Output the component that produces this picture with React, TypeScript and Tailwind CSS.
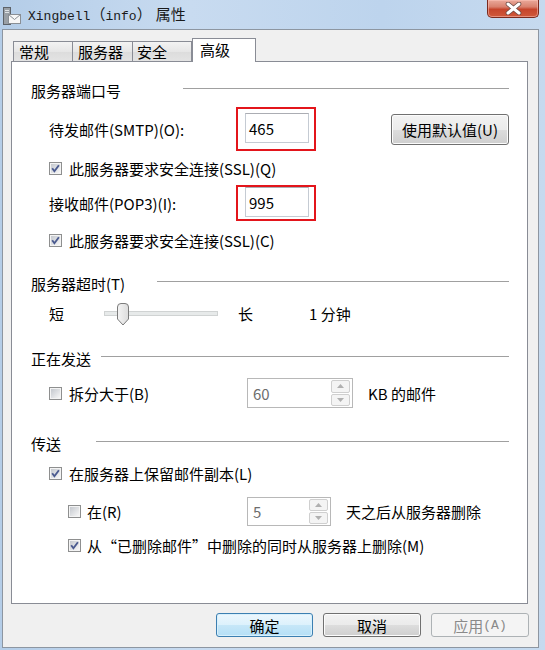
import React from 'react';

const Checkbox = ({ checked }: { checked: boolean }) => (
  <svg width="13" height="13" viewBox="0 0 13 13" className="shrink-0">
    <defs>
      <linearGradient id="cbInner" x1="0" y1="0" x2="1" y2="1">
        <stop offset="0" stopColor="#c4c8ce" />
        <stop offset="1" stopColor="#f7f7f7" />
      </linearGradient>
    </defs>
    <rect x="0.5" y="0.5" width="12" height="12" fill="#f4f4f4" stroke="#8e8f8f" />
    <rect x="2" y="2" width="9" height="9" fill="url(#cbInner)" />
    {checked && <path d="M3.2 6.3 L5.4 9.2 L9.9 3.2" fill="none" stroke="#4a5a8f" strokeWidth="1.9" />}
  </svg>
);

const Header = ({ label, w }: { label: string; w: string }) => (
  <div className="flex items-center h-[20px] pl-[19px] pr-[18px]">
    <span className={`${w} shrink-0`}>{label}</span>
    <div className="flex-1 h-px bg-[#a0a0a0] mb-[4px]" />
  </div>
);

const Spinner = ({ value, w, h }: { value: string; w: string; h: string }) => (
  <div className={`${w} ${h} shrink-0 flex items-stretch border border-[#b8b8b8] bg-white`}>
    <span className="flex-1 pl-[5px] flex items-center text-[#6d6d6d]">{value}</span>
    <div className="w-[19px] mr-[2px] py-[1px] flex flex-col gap-[1px]">
      <div className="flex-1 rounded-[2px] border border-[#cfcfcf] bg-[#f4f4f4] flex items-center justify-center">
        <svg width="7" height="4" viewBox="0 0 7 4"><path d="M0 4 L3.5 0 L7 4 Z" fill="#b0b0b0" /></svg>
      </div>
      <div className="flex-1 rounded-[2px] border border-[#cfcfcf] bg-[#f4f4f4] flex items-center justify-center">
        <svg width="7" height="4" viewBox="0 0 7 4"><path d="M0 0 L3.5 4 L7 0 Z" fill="#b0b0b0" /></svg>
      </div>
    </div>
  </div>
);

const TextBox = ({ value }: { value: string }) => (
  <div className="w-[64px] h-[30px] border border-[#c5cbd3] border-t-[#abadb3] bg-white flex items-center pl-[3px]">
    {value}
  </div>
);

export default function App() {
  return (
    <div className="w-[545px] h-[650px] overflow-hidden bg-[linear-gradient(90deg,#b4cde8,#c8dbf0_35%,#bdd4ed_70%,#c6daef)] text-[15px] text-black font-['Noto_Sans_CJK_SC',sans-serif] leading-none">
      {/* Title bar */}
      <div className="h-[29px] flex items-start">
        <svg width="18" height="20" viewBox="0 0 18 20" className="ml-[3px] mt-[6px] shrink-0">
          <rect x="0.5" y="1.5" width="7" height="17" fill="#9aa0a6" stroke="#5d6268" />
          <rect x="2" y="4" width="4" height="1" fill="#dfe3e6" />
          <rect x="2" y="6" width="4" height="1" fill="#dfe3e6" />
          <rect x="5.5" y="8.5" width="12" height="9" fill="#f7f7f7" stroke="#8a8f95" />
          <path d="M5.5 8.5 L11.5 13.5 L17.5 8.5" fill="none" stroke="#8a8f95" />
        </svg>
        <div className="ml-[7px] mt-[6px] flex items-baseline text-[#1a1a1a]">
          <span className="font-['Liberation_Mono',monospace] text-[13px]">Xingbell</span>
          <span className="text-[15px]">（</span>
          <span className="font-['Liberation_Mono',monospace] text-[13px]">info</span>
          <span className="text-[15px]">）</span>
          <span className="text-[15px] ml-[4px]">属性</span>
        </div>
        <div className="ml-auto mr-[6px] w-[52px] h-[18px] rounded-b-[5px] border border-t-0 border-[#7a2a1e] bg-[linear-gradient(#eaa99a,#d9826f_40%,#c6452c_55%,#d0593b)] flex items-center justify-center shadow-[inset_0_0_0_1px_rgba(255,200,190,0.5)]">
          <svg width="17" height="13" viewBox="0 0 17 13">
            <path d="M3 2 L14 11 M14 2 L3 11" stroke="#6b4a44" strokeWidth="4.6" strokeLinecap="round" />
            <path d="M3 2 L14 11 M14 2 L3 11" stroke="#ffffff" strokeWidth="3" strokeLinecap="round" />
          </svg>
        </div>
      </div>

      {/* Client area */}
      <div className="ml-[2px] w-[537px] h-[619px] border border-[#8d96a1] bg-[#f0f0f0] flex flex-col">
        {/* Tabs */}
        <div className="mt-[8px] pl-[10px] h-[23px] flex items-end">
          <div className="w-[60px] h-[20px] border border-b-0 border-[#898c95] bg-[linear-gradient(#f3f3f3,#e6e6e6_50%,#dcdcdc_51%,#e3e3e3)] pl-[5px] flex items-center">常规</div>
          <div className="w-[60px] h-[20px] border border-b-0 border-l-0 border-[#898c95] bg-[linear-gradient(#f3f3f3,#e6e6e6_50%,#dcdcdc_51%,#e3e3e3)] pl-[5px] flex items-center">服务器</div>
          <div className="w-[59px] h-[20px] border border-b-0 border-l-0 border-[#898c95] bg-[linear-gradient(#f3f3f3,#e6e6e6_50%,#dcdcdc_51%,#e3e3e3)] pl-[4px] flex items-center">安全</div>
          <div className="w-[64px] h-[24px] -mb-px relative z-10 border border-b-0 border-[#898c95] bg-white pl-[7px] pb-[2px] flex items-center">高级</div>
        </div>

        {/* Panel */}
        <div className="ml-[8px] w-[517px] h-[543px] border border-[#898c95] bg-white flex flex-col">
          <div className="mt-[18px]">
            <Header label="服务器端口号" w="w-[152px]" />
          </div>

          <div className="mt-[7px] h-[44px] flex items-center pl-[37px]">
            <span className="w-[187px] shrink-0">待发邮件(SMTP)(O):</span>
            <div className="w-[80px] h-[44px] shrink-0 border-2 border-[#e3151b] pt-[4px] pl-[7px]">
              <TextBox value="465" />
            </div>
            <button className="ml-[75px] w-[118px] h-[31px] rounded-[3px] border border-[#707070] bg-[linear-gradient(#f2f2f2,#ebebeb_50%,#dddddd_51%,#cfcfcf)] shadow-[inset_0_0_0_1px_#fcfcfc] text-[15px] font-['Noto_Sans_CJK_SC',sans-serif]">
              使用默认值(U)
            </button>
          </div>

          <div className="h-[34px] flex items-center pl-[37px] gap-[7px]">
            <Checkbox checked />
            <span>此服务器要求安全连接(SSL)(Q)</span>
          </div>

          <div className="h-[36px] flex items-center pl-[37px]">
            <span className="w-[187px] shrink-0">接收邮件(POP3)(I):</span>
            <div className="w-[80px] h-[36px] shrink-0 border-2 border-[#e3151b] pl-[7px]">
              <TextBox value="995" />
            </div>
          </div>

          <div className="h-[38px] flex items-center pl-[37px] gap-[7px]">
            <Checkbox checked />
            <span>此服务器要求安全连接(SSL)(C)</span>
          </div>

          <div className="mt-[14px]">
            <Header label="服务器超时(T)" w="w-[126px]" />
          </div>

          <div className="h-[40px] flex items-center pl-[37px]">
            <span className="w-[55px] shrink-0">短</span>
            <div className="relative w-[114px] h-[5px] shrink-0 border border-[#d0d3d3] bg-[#e7eaea]">
              <svg width="14" height="23" viewBox="0 0 14 23" className="absolute left-[11px] -top-[9px]">
                <defs>
                  <linearGradient id="thumbFill" x1="0" y1="0" x2="1" y2="0">
                    <stop offset="0" stopColor="#f4f4f4" />
                    <stop offset="1" stopColor="#dcdcdc" />
                  </linearGradient>
                </defs>
                <path d="M1.5 4 Q1.5 0.5 5 0.5 H9 Q12.5 0.5 12.5 4 V16 L7 22 L1.5 16 Z" fill="url(#thumbFill)" stroke="#7b7b7b" />
              </svg>
            </div>
            <span className="ml-[20px] w-[15px] shrink-0">长</span>
            <span className="ml-[56px]">1 分钟</span>
          </div>

          <div className="mt-[15px]">
            <Header label="正在发送" w="w-[70px]" />
          </div>

          <div className="h-[50px] flex items-center pl-[37px]">
            <Checkbox checked={false} />
            <span className="ml-[7px] w-[178px] shrink-0">拆分大于(B)</span>
            <Spinner value="60" w="w-[106px]" h="h-[30px]" />
            <span className="ml-[15px]">KB 的邮件</span>
          </div>

          <div className="mt-[15px]">
            <Header label="传送" w="w-[65px]" />
          </div>

          <div className="h-[40px] flex items-center pl-[37px] gap-[7px]">
            <Checkbox checked />
            <span>在服务器上保留邮件副本(L)</span>
          </div>

          <div className="h-[36px] flex items-center pl-[56px]">
            <Checkbox checked={false} />
            <span className="ml-[6px] w-[160px] shrink-0">在(R)</span>
            <Spinner value="5" w="w-[84px]" h="h-[29px]" />
            <span className="ml-[15px]">天之后从服务器删除</span>
          </div>

          <div className="h-[32px] flex items-center pl-[56px] gap-[6px]">
            <Checkbox checked />
            <span>从“已删除邮件”中删除的同时从服务器上删除(M)</span>
          </div>
        </div>

        {/* Dialog buttons */}
        <div className="mt-[9px] flex justify-end gap-[10px] pr-[9px]">
          <button className="w-[97px] h-[24px] rounded-[3px] border border-[#3c7fb1] bg-[linear-gradient(#ecf7fd,#dcf1fc_50%,#c6e7f8_51%,#b5dff6)] shadow-[inset_0_0_0_1px_#d8f0fc] text-[15px] font-['Noto_Sans_CJK_SC',sans-serif]">
            确定
          </button>
          <button className="w-[98px] h-[24px] rounded-[3px] border border-[#707070] bg-[linear-gradient(#f2f2f2,#ebebeb_50%,#dddddd_51%,#cfcfcf)] shadow-[inset_0_0_0_1px_#fcfcfc] text-[15px] font-['Noto_Sans_CJK_SC',sans-serif]">
            取消
          </button>
          <button className="w-[98px] h-[24px] rounded-[3px] border border-[#adb2b5] bg-[#f4f4f4] text-[#8a8a8a] text-[15px] font-['Noto_Sans_CJK_SC',sans-serif] flex items-center justify-center">
            应用<span className="font-['Liberation_Mono',monospace] text-[13px]">(A)</span>
          </button>
        </div>
      </div>
    </div>
  );
}
